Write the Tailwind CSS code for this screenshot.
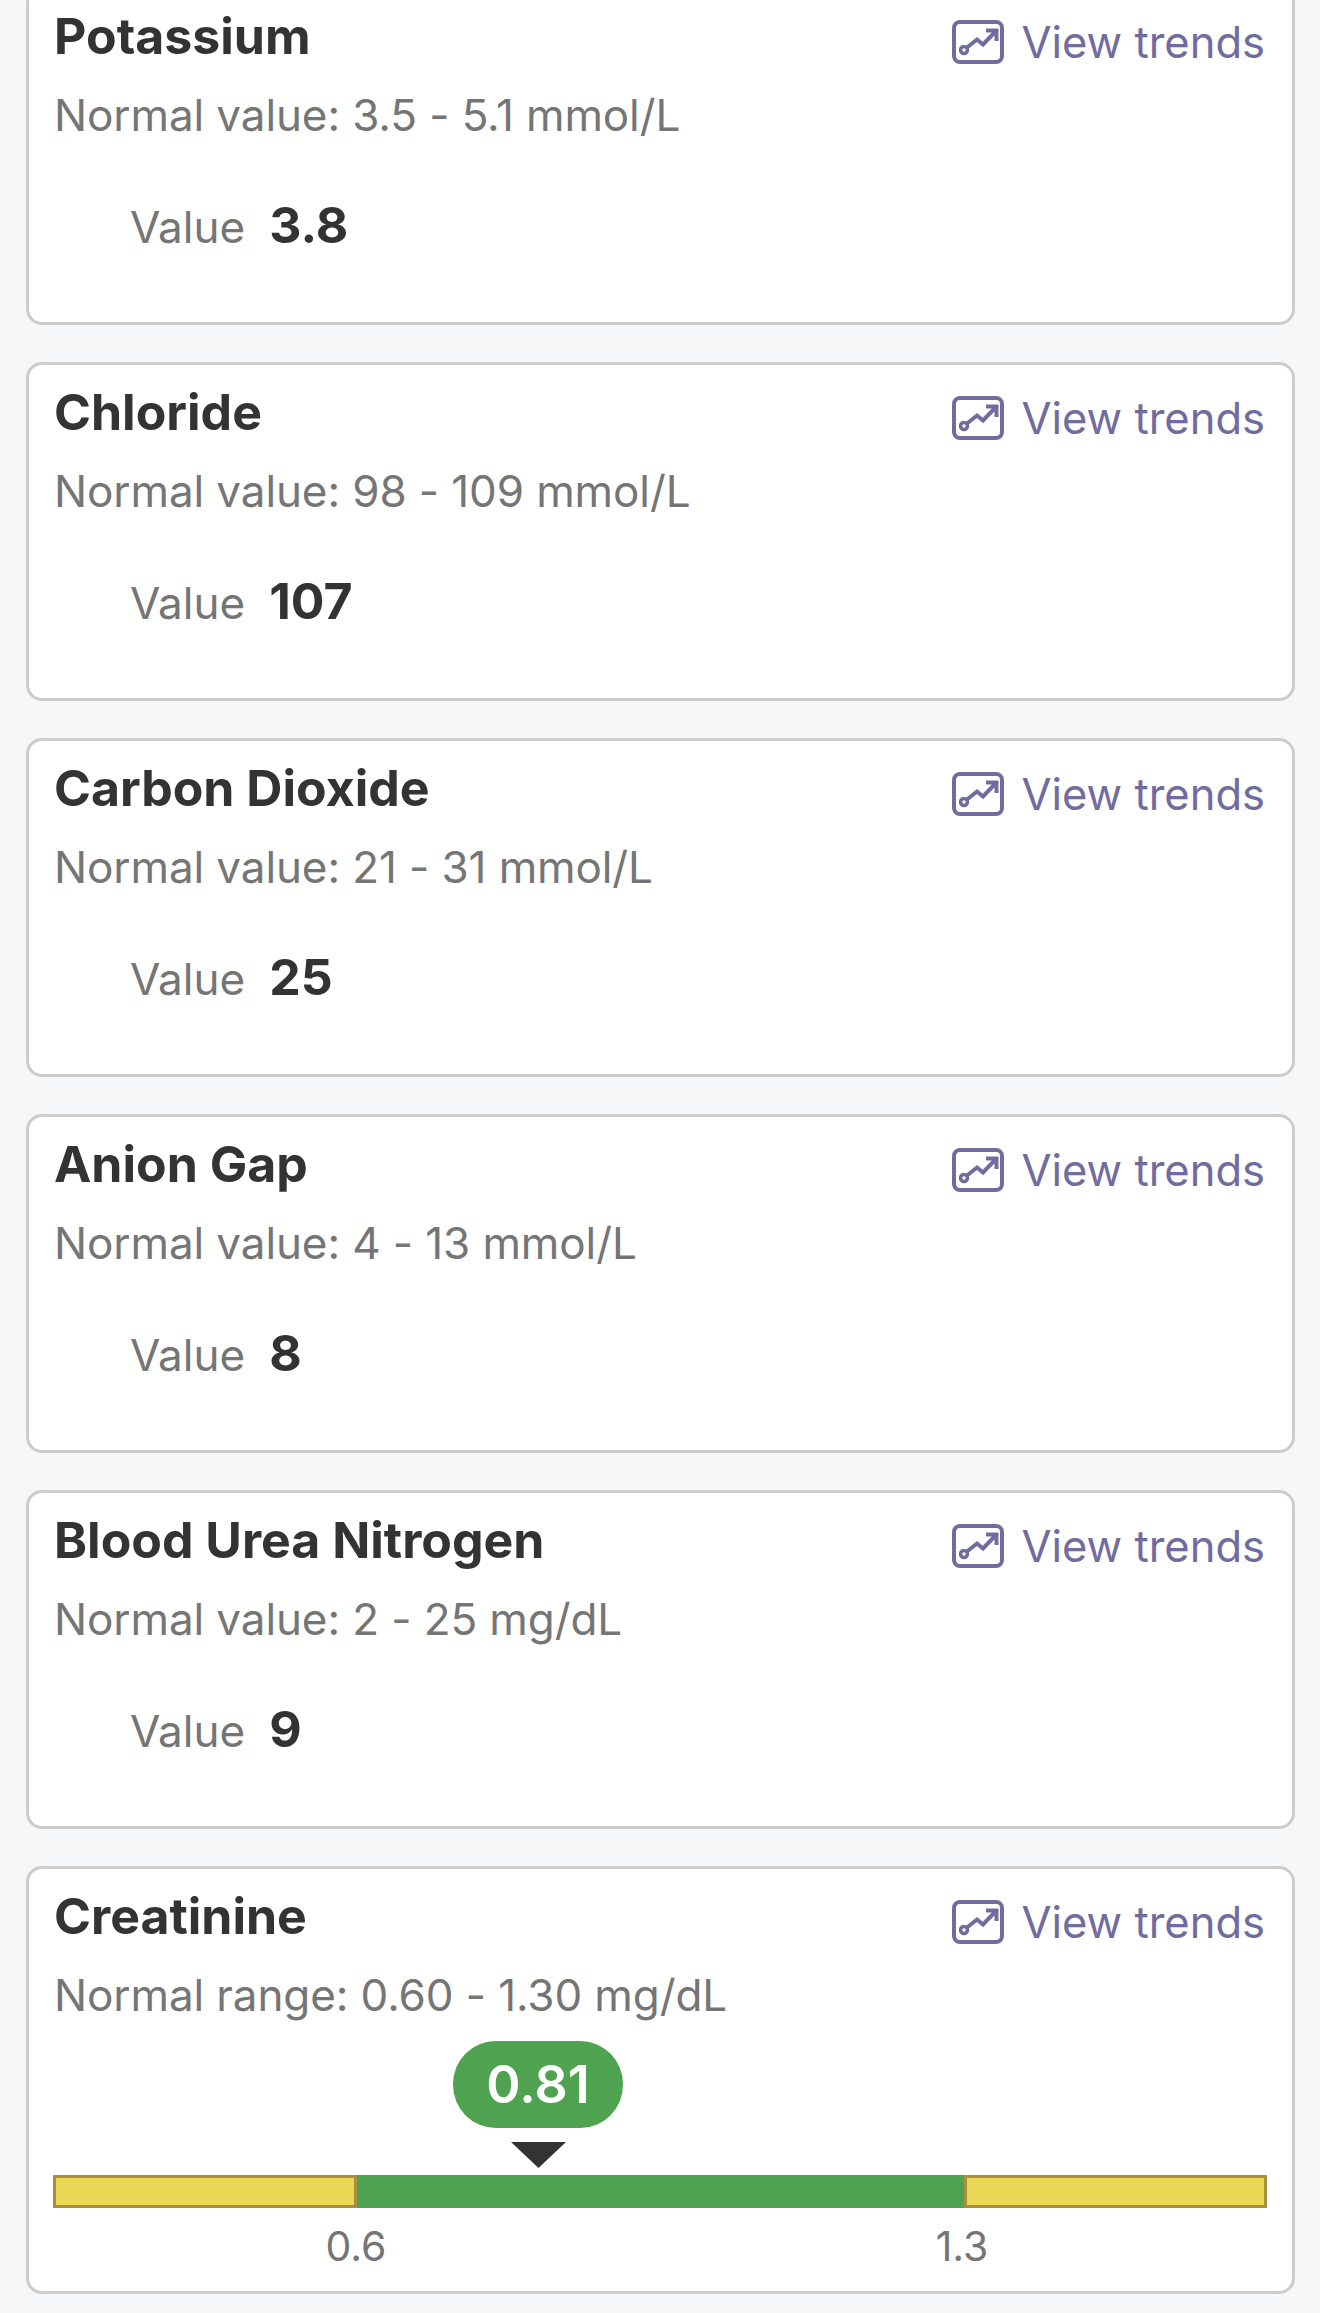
<!DOCTYPE html>
<html lang="en">
  <head>
    <meta charset="UTF-8" />
    <meta name="viewport" content="width=device-width, initial-scale=1.0" />
    <script src="https://cdn.jsdelivr.net/npm/@tailwindcss/browser@4"></script>
    <title>Lab results</title>
  </head>
  <body class="bg-[#f6f7f9] font-[family-name:Inter,sans-serif] text-[#333333] overflow-hidden">
    <svg class="hidden">
      <symbol id="trend" viewBox="0 0 52 44">
        <rect x="2" y="2" width="48" height="40" rx="6" fill="none" stroke="currentColor" stroke-width="4" />
        <circle cx="12" cy="30" r="3.5" fill="none" stroke="currentColor" stroke-width="3.5" />
        <path d="M15 27.5 L25 19.5 L31 24.5 L43 12" fill="none" stroke="currentColor" stroke-width="4" />
        <path d="M34 10.5 H44.5 V21" fill="none" stroke="currentColor" stroke-width="4" />
      </symbol>
    </svg>

    <main class="-mt-[14px] ml-[26px] w-[1269px] flex flex-col gap-[37px]">
      <!-- Potassium -->
      <section class="h-[339px] bg-white border-[3px] border-[#cccccc] rounded-[16px] pl-[22px] pr-[27px] pt-[17px]">
        <div class="h-[60px] flex justify-between items-start">
          <h2 class="pl-[3px] text-[50px] leading-[60px] font-bold">Potassium</h2>
          <a class="flex items-center gap-[18px] text-[#716c9f] text-[43.5px] leading-[52px] mt-[10px]"><svg class="w-[52px] h-[44px]"><use href="#trend" /></svg>View trends</a>
        </div>
        <p class="pl-[3px] mt-[23px] text-[44px] leading-[52px] tracking-[-0.1px] text-[#757575]">Normal value: 3.5 - 5.1 mmol/L</p>
        <div class="pl-[79px] mt-[54px] flex items-baseline gap-[24px]">
          <span class="text-[44px] leading-[60px] text-[#757575]">Value</span>
          <span class="text-[50px] leading-[60px] font-bold">3.8</span>
        </div>
      </section>

      <!-- Chloride -->
      <section class="h-[339px] bg-white border-[3px] border-[#cccccc] rounded-[16px] pl-[22px] pr-[27px] pt-[17px]">
        <div class="h-[60px] flex justify-between items-start">
          <h2 class="pl-[3px] text-[50px] leading-[60px] font-bold">Chloride</h2>
          <a class="flex items-center gap-[18px] text-[#716c9f] text-[43.5px] leading-[52px] mt-[10px]"><svg class="w-[52px] h-[44px]"><use href="#trend" /></svg>View trends</a>
        </div>
        <p class="pl-[3px] mt-[23px] text-[44px] leading-[52px] tracking-[-0.1px] text-[#757575]">Normal value: 98 - 109 mmol/L</p>
        <div class="pl-[79px] mt-[54px] flex items-baseline gap-[24px]">
          <span class="text-[44px] leading-[60px] text-[#757575]">Value</span>
          <span class="text-[50px] leading-[60px] font-bold">107</span>
        </div>
      </section>

      <!-- Carbon Dioxide -->
      <section class="h-[339px] bg-white border-[3px] border-[#cccccc] rounded-[16px] pl-[22px] pr-[27px] pt-[17px]">
        <div class="h-[60px] flex justify-between items-start">
          <h2 class="pl-[3px] text-[50px] leading-[60px] font-bold">Carbon Dioxide</h2>
          <a class="flex items-center gap-[18px] text-[#716c9f] text-[43.5px] leading-[52px] mt-[10px]"><svg class="w-[52px] h-[44px]"><use href="#trend" /></svg>View trends</a>
        </div>
        <p class="pl-[3px] mt-[23px] text-[44px] leading-[52px] tracking-[-0.1px] text-[#757575]">Normal value: 21 - 31 mmol/L</p>
        <div class="pl-[79px] mt-[54px] flex items-baseline gap-[24px]">
          <span class="text-[44px] leading-[60px] text-[#757575]">Value</span>
          <span class="text-[50px] leading-[60px] font-bold">25</span>
        </div>
      </section>

      <!-- Anion Gap -->
      <section class="h-[339px] bg-white border-[3px] border-[#cccccc] rounded-[16px] pl-[22px] pr-[27px] pt-[17px]">
        <div class="h-[60px] flex justify-between items-start">
          <h2 class="pl-[3px] text-[50px] leading-[60px] font-bold">Anion Gap</h2>
          <a class="flex items-center gap-[18px] text-[#716c9f] text-[43.5px] leading-[52px] mt-[10px]"><svg class="w-[52px] h-[44px]"><use href="#trend" /></svg>View trends</a>
        </div>
        <p class="pl-[3px] mt-[23px] text-[44px] leading-[52px] tracking-[-0.1px] text-[#757575]">Normal value: 4 - 13 mmol/L</p>
        <div class="pl-[79px] mt-[54px] flex items-baseline gap-[24px]">
          <span class="text-[44px] leading-[60px] text-[#757575]">Value</span>
          <span class="text-[50px] leading-[60px] font-bold">8</span>
        </div>
      </section>

      <!-- Blood Urea Nitrogen -->
      <section class="h-[339px] bg-white border-[3px] border-[#cccccc] rounded-[16px] pl-[22px] pr-[27px] pt-[17px]">
        <div class="h-[60px] flex justify-between items-start">
          <h2 class="pl-[3px] text-[50px] leading-[60px] font-bold">Blood Urea Nitrogen</h2>
          <a class="flex items-center gap-[18px] text-[#716c9f] text-[43.5px] leading-[52px] mt-[10px]"><svg class="w-[52px] h-[44px]"><use href="#trend" /></svg>View trends</a>
        </div>
        <p class="pl-[3px] mt-[23px] text-[44px] leading-[52px] tracking-[-0.1px] text-[#757575]">Normal value: 2 - 25 mg/dL</p>
        <div class="pl-[79px] mt-[54px] flex items-baseline gap-[24px]">
          <span class="text-[44px] leading-[60px] text-[#757575]">Value</span>
          <span class="text-[50px] leading-[60px] font-bold">9</span>
        </div>
      </section>

      <!-- Creatinine -->
      <section class="h-[428px] bg-white border-[3px] border-[#cccccc] rounded-[16px] pl-[22px] pr-[27px] pt-[17px]">
        <div class="h-[60px] flex justify-between items-start">
          <h2 class="pl-[3px] text-[50px] leading-[60px] font-bold">Creatinine</h2>
          <a class="flex items-center gap-[18px] text-[#716c9f] text-[43.5px] leading-[52px] mt-[10px]"><svg class="w-[52px] h-[44px]"><use href="#trend" /></svg>View trends</a>
        </div>
        <p class="pl-[3px] mt-[23px] text-[44px] leading-[52px] tracking-[-0.1px] text-[#757575]">Normal range: 0.60 - 1.30 mg/dL</p>

        <!-- gauge, the marker and ticks are placed by their value -->
        <div class="relative ml-[2px] w-[1214px] h-[33px] mt-[154px] flex">
          <div class="w-[304px] bg-[#ecd655] border-[3px] border-[#a8913a]"></div>
          <div class="w-[607px] bg-[#4ea250]"></div>
          <div class="w-[303px] bg-[#ecd655] border-[3px] border-[#a8913a]"></div>

          <div class="absolute left-[400px] -top-[134px] w-[170px] h-[87px] rounded-[43px] bg-[#4ea250] text-white text-[52px] font-semibold flex items-center justify-center">0.81</div>
          <svg class="absolute left-[458px] -top-[33px] w-[55px] h-[26px]" viewBox="0 0 55 26"><path d="M0 0 H55 L27.5 26 Z" fill="#333333" /></svg>

          <span class="absolute left-[243px] top-[47px] w-[120px] text-center text-[41px] leading-[48px] text-[#757575]">0.6</span>
          <span class="absolute left-[849px] top-[47px] w-[120px] text-center text-[41px] leading-[48px] text-[#757575]">1.3</span>
        </div>
      </section>
    </main>
  </body>
</html>
